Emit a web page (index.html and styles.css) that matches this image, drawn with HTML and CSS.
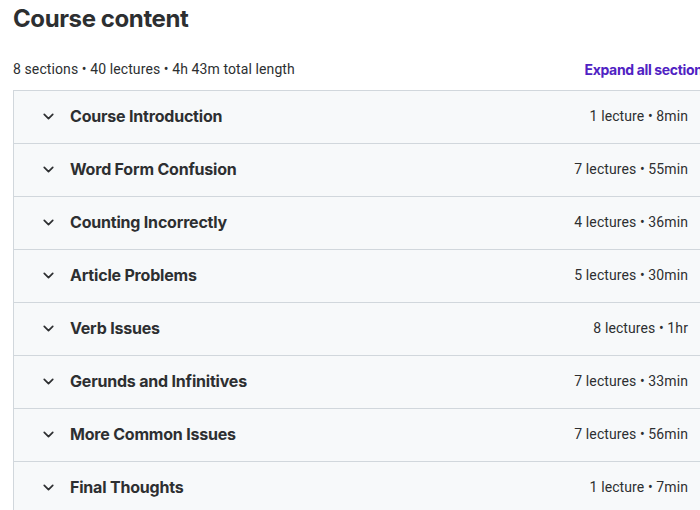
FILE: index.html
```html
<!DOCTYPE html>
<html lang="en">
<head>
<meta charset="utf-8">
<title>Course content</title>
<link rel="stylesheet" href="styles.css">
</head>
<body>
<div class="page">
  <h2 class="title">Course content</h2>
  <div class="meta">
    <span class="meta-text">8 sections • 40 lectures • 4h 43m total length</span>
    <button class="expand">Expand all sections</button>
  </div>
  <div class="sections">
    <div class="row"><span class="left"><svg class="chev" viewBox="0 0 24 24"><path d="M6 9l6 6 6-6"/></svg><span class="name">Course Introduction</span></span><span class="info">1 lecture • 8min</span></div>
    <div class="row"><span class="left"><svg class="chev" viewBox="0 0 24 24"><path d="M6 9l6 6 6-6"/></svg><span class="name">Word Form Confusion</span></span><span class="info">7 lectures • 55min</span></div>
    <div class="row"><span class="left"><svg class="chev" viewBox="0 0 24 24"><path d="M6 9l6 6 6-6"/></svg><span class="name">Counting Incorrectly</span></span><span class="info">4 lectures • 36min</span></div>
    <div class="row"><span class="left"><svg class="chev" viewBox="0 0 24 24"><path d="M6 9l6 6 6-6"/></svg><span class="name">Article Problems</span></span><span class="info">5 lectures • 30min</span></div>
    <div class="row"><span class="left"><svg class="chev" viewBox="0 0 24 24"><path d="M6 9l6 6 6-6"/></svg><span class="name">Verb Issues</span></span><span class="info">8 lectures • 1hr</span></div>
    <div class="row"><span class="left"><svg class="chev" viewBox="0 0 24 24"><path d="M6 9l6 6 6-6"/></svg><span class="name">Gerunds and Infinitives</span></span><span class="info">7 lectures • 33min</span></div>
    <div class="row"><span class="left"><svg class="chev" viewBox="0 0 24 24"><path d="M6 9l6 6 6-6"/></svg><span class="name">More Common Issues</span></span><span class="info">7 lectures • 56min</span></div>
    <div class="row"><span class="left"><svg class="chev" viewBox="0 0 24 24"><path d="M6 9l6 6 6-6"/></svg><span class="name">Final Thoughts</span></span><span class="info">1 lecture • 7min</span></div>
  </div>
</div>
</body>
</html>
```
FILE: styles.css
```css
html, body {
  margin: 0;
  padding: 0;
  overflow: hidden;
  background: #ffffff;
}
body {
  font-family: Roboto, "Liberation Sans", sans-serif;
  color: #2d2f31;
}
.page {
  width: 697px;
  padding-left: 13px;
}
.title {
  margin: 0;
  padding-top: 4px;
  font-family: Inter, Roboto, sans-serif;
  font-size: 24px;
  line-height: 30px;
  font-weight: 700;
  letter-spacing: -0.4px;
}
.meta {
  display: flex;
  justify-content: space-between;
  align-items: center;
  margin-top: 22px;
  height: 26px;
  margin-bottom: 8px;
}
.meta-text {
  font-size: 14px;
  letter-spacing: 0.1px;
}
.expand {
  border: 0;
  background: none;
  padding: 0;
  font-family: Inter, Roboto, sans-serif;
  font-size: 14px;
  font-weight: 700;
  letter-spacing: -0.35px;
  color: #5022c3;
  white-space: nowrap;
}
.sections {
  border: 1px solid #d1d7dc;
  border-right: 0;
}
.row {
  display: flex;
  justify-content: space-between;
  align-items: center;
  height: 50px;
  padding: 0 22px 2px 26px;
  background: #f7f9fa;
  border-bottom: 1px solid #d1d7dc;
}
.left {
  display: flex;
  align-items: center;
}
.chev {
  width: 17px;
  height: 17px;
  fill: none;
  stroke: #2d2f31;
  stroke-width: 2.4;
  stroke-linecap: round;
  stroke-linejoin: round;
  margin-right: 13px;
}
.name {
  font-family: Inter, Roboto, sans-serif;
  font-size: 16px;
  font-weight: 700;
  letter-spacing: -0.2px;
}
.info {
  font-size: 14px;
  letter-spacing: 0.1px;
  white-space: nowrap;
}
```
